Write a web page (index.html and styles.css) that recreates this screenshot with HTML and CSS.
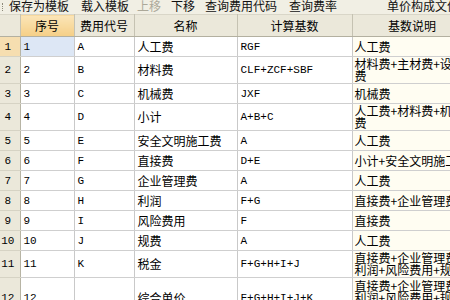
FILE: index.html
```html
<!DOCTYPE html>
<html>
<head>
<meta charset="utf-8">
<link rel="stylesheet" href="styles.css">
</head>
<body>
<div class="toolbar">
  <span class="grip"></span>
  <span class="tb t1">保存为模板</span>
  <span class="tb t2">载入模板</span>
  <span class="tb t3 disabled">上移</span>
  <span class="tb t4">下移</span>
  <span class="tb t5">查询费用代码</span>
  <span class="tb t6">查询费率</span>
  <span class="tb t7">单价构成文件</span>
</div>
<table class="grid">
  <colgroup>
    <col class="c0"><col class="c1"><col class="c2"><col class="c3"><col class="c4"><col class="c5">
  </colgroup>
  <thead>
    <tr>
      <th class="corner"></th>
      <th class="sel">序号</th>
      <th>费用代号</th>
      <th>名称</th>
      <th>计算基数</th>
      <th>基数说明</th>
    </tr>
  </thead>
  <tbody>
    <tr class="r1"><td class="rh rhsel">1</td><td class="num cur">1</td><td class="code">A</td><td>人工费</td><td class="code">RGF</td><td class="desc">人工费</td></tr>
    <tr class="r2"><td class="rh">2</td><td class="num">2</td><td class="code">B</td><td>材料费</td><td class="code">CLF+ZCF+SBF</td><td class="desc">材料费+主材费+设备费</td></tr>
    <tr class="r1"><td class="rh">3</td><td class="num">3</td><td class="code">C</td><td>机械费</td><td class="code">JXF</td><td class="desc">机械费</td></tr>
    <tr class="r2"><td class="rh">4</td><td class="num">4</td><td class="code">D</td><td>小计</td><td class="code">A+B+C</td><td class="desc">人工费+材料费+机械费</td></tr>
    <tr class="r1"><td class="rh">5</td><td class="num">5</td><td class="code">E</td><td>安全文明施工费</td><td class="code">A</td><td class="desc">人工费</td></tr>
    <tr class="r1"><td class="rh">6</td><td class="num">6</td><td class="code">F</td><td>直接费</td><td class="code">D+E</td><td class="desc">小计+安全文明施工费</td></tr>
    <tr class="r1"><td class="rh">7</td><td class="num">7</td><td class="code">G</td><td>企业管理费</td><td class="code">A</td><td class="desc">人工费</td></tr>
    <tr class="r1"><td class="rh">8</td><td class="num">8</td><td class="code">H</td><td>利润</td><td class="code">F+G</td><td class="desc">直接费+企业管理费</td></tr>
    <tr class="r1"><td class="rh">9</td><td class="num">9</td><td class="code">I</td><td>风险费用</td><td class="code">F</td><td class="desc">直接费</td></tr>
    <tr class="r1"><td class="rh">10</td><td class="num">10</td><td class="code">J</td><td>规费</td><td class="code">A</td><td class="desc">人工费</td></tr>
    <tr class="r2"><td class="rh">11</td><td class="num">11</td><td class="code">K</td><td>税金</td><td class="code">F+G+H+I+J</td><td class="desc">直接费+企业管理费+利润+风险费用+规费</td></tr>
    <tr class="r3"><td class="rh">12</td><td class="num">12</td><td class="code"></td><td>综合单价</td><td class="code">F+G+H+I+J+K</td><td class="desc">直接费+企业管理费+利润+风险费用+规费+税金</td></tr>
  </tbody>
</table>
</body>
</html>
```

FILE: styles.css
```css
html, body {
  margin: 0;
  padding: 0;
}
body {
  width: 450px;
  height: 300px;
  overflow: hidden;
  background: #ffffff;
  font-family: "Noto Sans CJK SC", sans-serif;
  font-size: 12px;
  color: #000;
}
.toolbar {
  height: 14px;
  background: #f1efe4;
  display: flex;
  align-items: flex-start;
  white-space: nowrap;
  overflow: hidden;
}
.grip {
  width: 1px;
  height: 8px;
  margin: 3px 0 0 2px;
  border-left: 1px dotted #8d8a7a;
}
.tb {
  line-height: 12px;
  color: #111;
}
.t1 { margin-left: 6px; }
.t2 { margin-left: 12px; }
.t3 { margin-left: 8px; }
.t4 { margin-left: 10px; }
.t5 { margin-left: 10px; }
.t6 { margin-left: 12px; }
.t7 { margin-left: 50px; }
.disabled { color: #aca899; }

.grid {
  border-collapse: collapse;
  table-layout: fixed;
  width: 472px;
}
.c0 { width: 20px; }
.c1 { width: 54px; }
.c2 { width: 60px; }
.c3 { width: 103px; }
.c4 { width: 115px; }
.c5 { width: 120px; }

th {
  height: 21px;
  padding: 0;
  font-weight: normal;
  text-align: center;
  background: #ebe8da;
  border-right: 1px solid #c5c2b2;
  border-bottom: 1px solid #b3b0a0;
  border-top: 1px solid #d9d6c8;
  line-height: 12px;
}
th.sel {
  background: linear-gradient(#fbe5b8, #f5cf86);
}
th.corner { background: #ebe8da; }

td {
  padding: 0 0 0 3px;
  border-right: 1px solid #c9c9c9;
  border-bottom: 1px solid #cfcfcf;
  vertical-align: middle;
  line-height: 12px;
  overflow: hidden;
  white-space: nowrap;
}
td.desc {
  white-space: normal;
  line-break: anywhere;
  word-break: break-all;
  background: #fffdf2;
  padding-left: 2px;
}
td.code, td.num {
  font-family: "Liberation Mono", monospace;
  font-size: 11px;
}
td.rh {
  background: #ebe8da;
  text-align: center;
  padding: 0 4px 0 0;
  font-family: "Liberation Mono", monospace;
  font-size: 11px;
  border-right: 1px solid #b7b4a4;
  border-bottom: 1px solid #d6d3c4;
}
td.rhsel { background: #f6deb0; }
td.cur { background: #dde7f5; }

tr.r1 td { height: 19px; }
tr.r2 td { height: 26px; }
tr.r3 td { height: 40px; }
```
